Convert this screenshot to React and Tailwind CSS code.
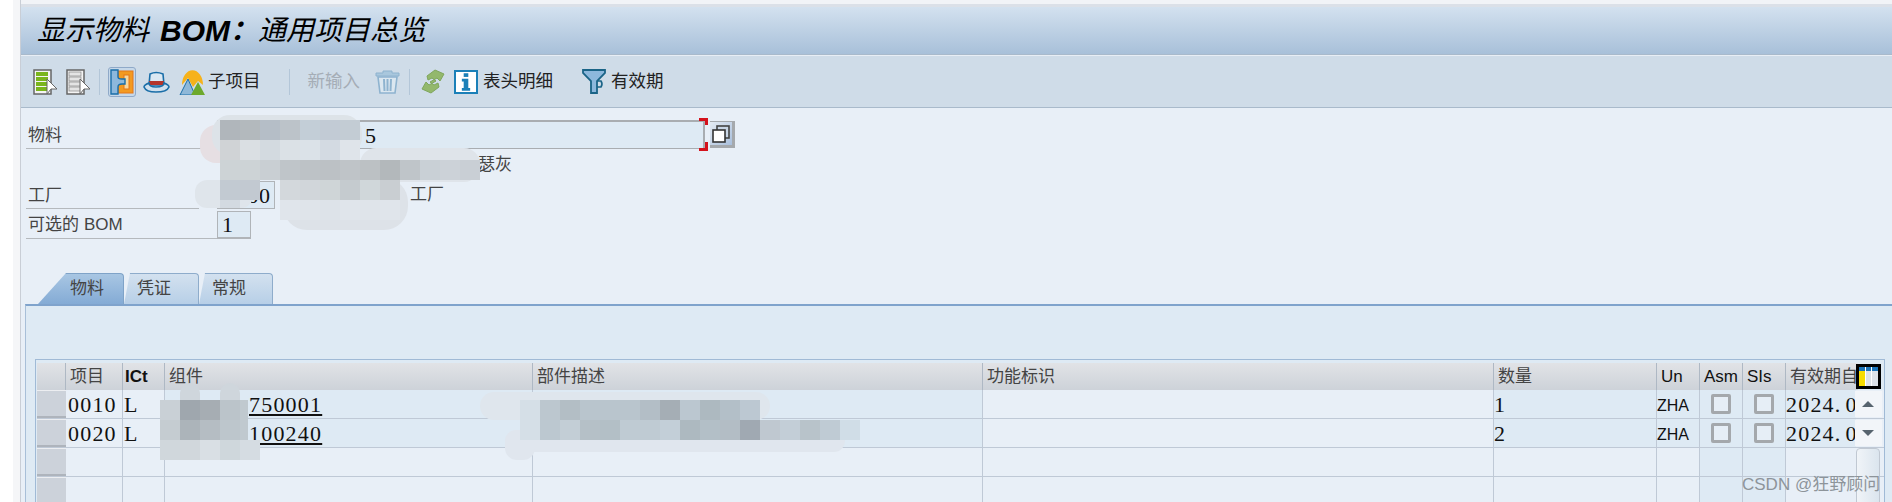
import React from 'react';

const serif = 'font-["Liberation_Serif","Noto_Sans_CJK_SC",serif]';
const sans = 'font-["Liberation_Sans","Noto_Sans_CJK_SC",sans-serif]';

// pixelated mosaic covering sensitive text, 20px squares like the screenshot
function Smudge({ className, cells }) {
  return (
    <div className={`absolute flex flex-col ${className}`}>
      {cells.map((row, i) => (
        <div key={i} className="flex">
          {row.map((c, j) => (
            <div key={j} style={{ width: 20, height: 20, background: c || 'transparent' }} />
          ))}
        </div>
      ))}
    </div>
  );
}

function Sep({ className }) {
  return <div className={`w-px h-[26px] shrink-0 bg-[#b3c6d8] ${className}`} />;
}

function LinesIcon({ green }) {
  const fill = green ? '#7ab51d' : '#e4e4e4';
  return (
    <svg width="25" height="26" viewBox="0 0 25 26" className="shrink-0">
      <rect x="1" y="1" width="17" height="24" fill="#f4f4f4" stroke="#666" strokeWidth="1.5" />
      {[3, 8, 13, 18].map((y) => (
        <rect key={y} x="3" y={y} width="12" height="4" fill={fill} stroke={green ? 'none' : '#888'} strokeWidth="0.7" />
      ))}
      <path d="M14 10 L24 20 L18 20 L14 25 Z" fill="#fff" stroke="#666" />
    </svg>
  );
}

function BridgeIcon() {
  return (
    <div className="w-[28px] h-[30px] shrink-0 border border-[#8fa9c8] rounded-[3px] bg-[#c6d8e9] flex items-center justify-center">
      <svg width="24" height="26" viewBox="0 0 24 26">
        <rect x="8" y="2" width="15" height="22" fill="#f39a21" stroke="#e4761b" />
        <rect x="14" y="6" width="5" height="14" fill="#f7d8a0" stroke="#e4761b" />
        <path d="M1 1 H8 V8 Q8 10 12 10 H15 V15 H12 Q8 15 8 18 V25 H1 Z" fill="#8db8dc" stroke="#1a6ea8" strokeWidth="1.4" />
      </svg>
    </div>
  );
}

function HatIcon() {
  return (
    <svg width="27" height="22" viewBox="0 0 27 22" className="shrink-0">
      <path d="M7 3 Q13 0 20 3 L21 14 H6 Z" fill="#dbe8f2" stroke="#1a6ea8" strokeWidth="1.6" />
      <rect x="6" y="10" width="15" height="4" fill="#b5352b" />
      <path d="M6 12 Q1 14 1 16 Q3 21 13 21 Q24 21 26 16 Q26 14 21 12 Q21 16 13 16 Q6 16 6 12 Z" fill="#cfe0ee" stroke="#1a6ea8" strokeWidth="1.6" />
    </svg>
  );
}

function MountainIcon() {
  return (
    <svg width="26" height="26" viewBox="0 0 26 26" className="shrink-0">
      <path d="M3 16 A10 14 0 0 1 24 16 L19 12 L14 18 L9 9 Z" fill="#f6b21b" />
      <path d="M1 26 L9 10 L16 26 Z" fill="#8fb8d8" stroke="#1a6ea8" />
      <path d="M12 26 L19 13 L26 26 Z" fill="#6da92c" />
    </svg>
  );
}

function TrashIcon() {
  return (
    <svg width="27" height="27" viewBox="0 0 27 27" className="shrink-0">
      <path d="M9 3 H18 V5 H25 V8 H2 V5 H9 Z" fill="#a9c7dd" stroke="#8eb3cf" />
      <path d="M4 9 H23 L21 25 H6 Z" fill="#dbe7f0" stroke="#8eb3cf" strokeWidth="1.6" />
      <path d="M10 11 L10.5 23 M13.5 11 V23 M17 11 L16.5 23" stroke="#8eb3cf" strokeWidth="2" />
    </svg>
  );
}

function SwapIcon() {
  return (
    <svg width="24" height="25" viewBox="0 0 24 25" className="shrink-0">
      <path d="M14 1 L23 5 L19 12 L16 9 L9 13 L13 16 L17 14 L18 18 L10 24 L1 20 L5 13 L8 16 L15 12 L11 9 L7 11 L6 7 Z" fill="#93b86c" stroke="#7fa65d" />
    </svg>
  );
}

function InfoIcon() {
  return (
    <div className="w-[24px] h-[24px] shrink-0 border-2 border-[#1b80b8] bg-white flex items-center justify-center">
      <svg width="12" height="18" viewBox="0 0 13 19">
        <rect x="4" y="0" width="5" height="4" fill="#1b80b8" />
        <path d="M2 6 H9 V16 H11 V19 H2 V16 H4 V9 H2 Z" fill="#1b80b8" />
      </svg>
    </div>
  );
}

function FilterIcon() {
  return (
    <svg width="24" height="25" viewBox="0 0 24 25" className="shrink-0">
      <path d="M1 1 H23 V4 L15 12 V24 H9 V12 L1 4 Z" fill="#8db8dc" stroke="#1a6487" strokeWidth="1.8" />
      <path d="M15 12 H19 Q21 15 19 18 H15" fill="none" stroke="#1a6487" strokeWidth="1.6" />
    </svg>
  );
}

function PopupIcon() {
  return (
    <div className="w-[25px] h-[27px] border-r-[3px] border-t border-b-[3px] border-[#a5a9ad] bg-gradient-to-br from-[#e4ebf3] to-[#a9bfdc] flex items-center justify-center">
      <svg width="20" height="20" viewBox="0 0 20 20">
        <rect x="6" y="2" width="12" height="12" fill="#c9d6e6" stroke="#444" strokeWidth="1.6" />
        <rect x="2" y="6" width="12" height="12" fill="#fff" stroke="#333" strokeWidth="1.6" />
      </svg>
    </div>
  );
}

function Label({ className, children }) {
  return (
    <div className={`h-full shrink-0 border-b border-[#b5b9bd] pl-[2px] pt-[3px] flex items-center text-[17px] text-[#444] whitespace-nowrap ${className}`}>
      {children}
    </div>
  );
}

function Head({ className, children, latin }) {
  return (
    <div className={`shrink-0 h-[27px] flex items-center overflow-hidden whitespace-nowrap border-r border-[#aeb8c4] bg-gradient-to-b from-[#e1e3e6] to-[#cdd2d9] pl-[4px] ${latin ? `${sans} text-[17px] text-[#111]` : 'text-[17px] text-[#444]'} ${className}`}>
      {children}
    </div>
  );
}

function Row({ no, link, qty, filled }) {
  const cell = 'shrink-0 h-full flex items-center overflow-hidden whitespace-nowrap border-r border-[#bfc9d6] text-[22px] tracking-[1.2px] text-[#111]';
  const tint = filled ? 'bg-[#deeaf4]' : 'bg-[#e8eff7]';
  const box = <div className="w-[20px] h-[20px] border-[3px] border-[#a4a8ac] rounded-[2px] bg-[#e6eef6]" />;
  return (
    <div className="flex h-[29px] border-b border-[#bfc9d6] bg-[#e8eff7]">
      <div className="w-[29px] shrink-0 border-t border-[#eceef1] border-b-2 border-b-[#aeb4bc] bg-[#ccd2da]" />
      <div className={`${cell} w-[57px] pl-[2px]`}>{no}</div>
      <div className={`${cell} w-[42px] pl-px`}>{filled ? 'L' : ''}</div>
      <div className={`${cell} w-[368px] ${tint} pl-[84px] underline underline-offset-2`}>{link}</div>
      <div className={`${cell} w-[450px] ${tint}`} />
      <div className={`${cell} w-[511px]`} />
      <div className={`${cell} w-[163px] ${tint}`}>{qty}</div>
      <div className={`${cell} w-[43px] ${tint} ${sans} !text-[16px] !tracking-normal pt-[3px]`}>{filled ? 'ZHA' : ''}</div>
      <div className={`${cell} w-[43px] bg-[#deeaf4] justify-center`}>{filled ? box : null}</div>
      <div className={`${cell} w-[43px] bg-[#deeaf4] justify-center`}>{filled ? box : null}</div>
      <div className={`${cell} w-[70px] ${tint} border-r-0`}>
        {filled ? <>2024.<span className="ml-[4px]">0</span></> : ''}
      </div>
    </div>
  );
}

export default function App() {
  return (
    <div className={`relative w-[1892px] h-[502px] overflow-hidden bg-white flex ${serif}`}>
      <div className="w-[13px] shrink-0 bg-white" />
      <div className="w-[7px] shrink-0 bg-[#f5f6f8]" />
      <div className="flex-1 min-w-0 flex flex-col border-l border-[#c9ced6] pt-[4px] bg-[#f1f3f7]">
        <div className="h-[3px] shrink-0 bg-[#dbe0e8]" />
        <div className={`h-[48px] shrink-0 bg-gradient-to-b from-[#d3e1ef] to-[#a8c0d9] border-b border-[#a9bacb] flex items-center pl-[16px] text-[28px] italic text-black whitespace-nowrap ${sans}`}>
          <span>显示物料</span>
          <span className="ml-[11px] font-bold text-[30px]">BOM</span>
          <span className="font-bold">：</span>
          <span>通用项目总览</span>
        </div>
        <div className="h-[53px] shrink-0 bg-[#cfdce8] border-t border-[#e8eef5] border-b border-b-[#a9bacb] flex items-center pl-[12px] text-[17.5px] text-[#222] whitespace-nowrap">
          <LinesIcon green />
          <div className="w-[8px] shrink-0" />
          <LinesIcon />
          <Sep className="ml-[8px]" />
          <div className="w-[8px] shrink-0" />
          <BridgeIcon />
          <div className="w-[7px] shrink-0" />
          <HatIcon />
          <div className="w-[9px] shrink-0" />
          <MountainIcon />
          <span className="ml-[3px]">子项目</span>
          <Sep className="ml-[28px]" />
          <span className="ml-[18px] text-[#a5adb6]">新输入</span>
          <div className="w-[14px] shrink-0" />
          <TrashIcon />
          <Sep className="ml-[8px]" />
          <div className="w-[11px] shrink-0" />
          <SwapIcon />
          <div className="w-[9px] shrink-0" />
          <InfoIcon />
          <span className="ml-[5px]">表头明细</span>
          <div className="w-[29px] shrink-0" />
          <FilterIcon />
          <span className="ml-[5px]">有效期</span>
        </div>
        <div className="flex-1 bg-[#e8eff7] flex flex-col relative">
          <div className="pt-[12px] pl-[5px] flex flex-col shrink-0">
            <div className="flex h-[29px]">
              <Label className="w-[191px]">物料</Label>
              <div className="w-[488px] border border-t-2 border-r-2 border-[#a9adb1] bg-[#deeaf4] flex items-center pl-[147px] text-[22px] text-[#111]">5</div>
              <div className="relative ml-[5px] mt-[1px]">
                <div className="absolute left-[-11px] top-[-3px] w-[9px] h-[7px] border-r-[3px] border-t-[3px] border-[#d4121c]" />
                <div className="absolute left-[-11px] top-[21px] w-[9px] h-[9px] border-r-[3px] border-b-[3px] border-[#d4121c]" />
                <PopupIcon />
              </div>
            </div>
            <div className="h-[32px] flex items-center pl-[452px] text-[17px] text-[#444]">瑟灰</div>
            <div className="flex h-[28px]">
              <Label className="w-[173px]">工厂</Label>
              <div className="w-[58px] ml-[18px] border border-[#b0b4b8] bg-[#deeaf4] flex items-center justify-end pr-[3px] text-[22px] tracking-[1px] text-[#111]">60</div>
              <div className="ml-[135px] flex items-center text-[17px] text-[#444]">工厂</div>
            </div>
            <div className="flex h-[30px]">
              <Label className="w-[191px]">
                可选的 <span className={`ml-[5px] ${sans} text-[17px]`}>BOM</span>
              </Label>
              <div className="w-[34px] mt-[2px] border border-b-2 border-[#b0b4b8] bg-[#deeaf4] flex items-center pl-[4px] text-[22px] text-[#111]">1</div>
            </div>
          </div>
          <div className="mt-[33px] ml-[4px] flex items-end h-[32px] shrink-0 text-[17px] text-[#444] pl-[13px]">
            <div className="w-[86px] h-[31px] bg-gradient-to-b from-[#a8c6e3] to-[#84abd5] border-t border-r border-[#7fa3c8] rounded-tr-sm flex items-center pl-[32px] [clip-path:polygon(28px_0,100%_0,100%_100%,0_100%)]">物料</div>
            <div className="w-[75px] h-[31px] bg-gradient-to-b from-[#d3e1ef] to-[#b7cfe7] border-t border-r border-[#8eaccb] rounded-tr-sm flex items-center pl-[13px] [clip-path:polygon(6px_0,100%_0,100%_100%,0_100%)]">凭证</div>
            <div className="w-[74px] h-[31px] bg-gradient-to-b from-[#d3e1ef] to-[#b7cfe7] border-t border-r border-[#8eaccb] rounded-tr-sm flex items-center pl-[13px] [clip-path:polygon(6px_0,100%_0,100%_100%,0_100%)]">常规</div>
          </div>
          <div className="ml-[4px] flex-1 border-t-2 border-t-[#7fa3cc] border-l border-l-[#a8bfd8] bg-[#deeaf4] pt-[53px] pl-[9px] pr-[7px]">
            <div className="relative h-[200px] border-t border-l border-r border-[#a0bad6] pt-[3px] pl-[1px]">
              <div className="flex">
                <Head className="w-[29px] pl-0" />
                <Head className="w-[57px]">项目</Head>
                <Head className="w-[42px] font-bold !pl-[2px]" latin>ICt</Head>
                <Head className="w-[368px]">组件</Head>
                <Head className="w-[450px]">部件描述</Head>
                <Head className="w-[511px]">功能标识</Head>
                <Head className="w-[163px]">数量</Head>
                <Head className="w-[43px]" latin>Un</Head>
                <Head className="w-[43px]" latin>Asm</Head>
                <Head className="w-[43px]" latin>SIs</Head>
                <Head className="w-[72px] border-r-0">有效期自</Head>
              </div>
              <Row no="0010" link="750001" qty="1" filled />
              <Row no="0020" link="100240" qty="2" filled />
              <Row />
              <Row />
              {/* table settings button and scroll bar */}
              <div className="absolute right-[2px] top-[4px] w-[28px] flex flex-col items-center">
                <svg width="25" height="25" viewBox="0 0 25 25">
                  <rect x="1.5" y="1.5" width="22" height="22" fill="#fff" stroke="#000" strokeWidth="3" />
                  <rect x="3" y="3" width="6" height="4" fill="#1a73b8" />
                  <rect x="10" y="3" width="5" height="4" fill="#1a73b8" />
                  <rect x="16" y="3" width="6" height="4" fill="#1a73b8" />
                  <rect x="3" y="7" width="6" height="15" fill="#f7dc00" />
                  <rect x="10" y="7" width="5" height="15" fill="#dde2e8" />
                  <rect x="16" y="7" width="6" height="15" fill="#dde2e8" />
                </svg>
                <div className="w-[27px] h-[26px] mt-[2px] bg-[#f2f5f9] flex items-center justify-center">
                  <div className="w-0 h-0 border-l-[6px] border-r-[6px] border-b-[6px] border-l-transparent border-r-transparent border-b-[#56636e]" />
                </div>
                <div className="w-[27px] h-[26px] mt-[3px] bg-[#f2f5f9] flex items-center justify-center">
                  <div className="w-0 h-0 border-l-[6px] border-r-[6px] border-t-[6px] border-l-transparent border-r-transparent border-t-[#56636e]" />
                </div>
                <div className="w-[24px] h-[70px] mt-[2px] border border-[#c0c8d2] rounded-sm bg-gradient-to-r from-[#f0f4f8] to-[#dbe5ee]" />
              </div>
            </div>
          </div>
        </div>
      </div>

      {/* header blur */}
      <div className="absolute left-[200px] top-[125px] w-[30px] h-[38px] rounded-l-[16px] bg-[#e6dfe3]" />
      <div className="absolute left-[212px] top-[115px] w-[150px] h-[40px] rounded-[18px] bg-[#dde3e8]" />
      <div className="absolute left-[360px] top-[148px] w-[120px] h-[34px] rounded-[16px] bg-[#dfe4ea]" />
      <div className="absolute left-[195px] top-[180px] w-[58px] h-[28px] rounded-[12px] bg-[#dfe5eb]" />
      <div className="absolute left-[283px] top-[178px] w-[125px] h-[52px] rounded-[24px] bg-[#dde2e8]" />
      <Smudge className="left-[220px] top-[120px]" cells={[
        ['#b0b6bb', '#b3b9bd', '#b5bec7', '#bcc3c9', '#c3ced7', '#c2cbd5', '#c3ccd4'],
        ['#d0d3d6', '#dadfe3', '#d3dae0', '#dbe1e6', '#dbe2e8', '#d3dae2', '#dfe4ea'],
        ['#cdd3d6', '#cdd3d6', '#c9cfd3', '#bfc5c9', '#bdc2c6', '#bcc1c5', '#bfc4c8', '#bcc1c4', '#b3b8bb', '#bfc5c9', '#c9d0d6', '#ccd2d8', '#c9cfd5'],
        ['#c2cad2', '#c2c9d1', '', '#d3d8dc', '#d1d6da', '#cfd5d7', '#c5cbcf', '#d0d7da', '#c9ced2'],
        ['', '', '', '#e0e5eb', '#dfe4ea', '#dde3e9', '#e0e5eb', '#dfe4ea', '#e0e5eb'],
      ]} />
      <div className="absolute left-[220px] top-[200px] w-[20px] h-[8px] bg-[#d3dae1]" />

      {/* table blurs */}
      <div className="absolute left-[180px] top-[383px] w-[20px] h-[20px] rounded-t-[10px] bg-[#cfd6dc]" />
      <div className="absolute left-[220px] top-[383px] w-[20px] h-[20px] rounded-t-[10px] bg-[#cfd6dc]" />
      <Smudge className="left-[160px] top-[400px]" cells={[
        ['#c9d0d6', '#9fa7ae', '#a6adb3', '#bbc4ca'],
        ['#c5ccd1', '#acb4ba', '#b5bdc3', '#bdc6cc'],
        ['#d0d7dc', '#d1d7dc', '#d9dfe4', '#cfd7dc', '#d5dce2'],
      ]} />
      <div className="absolute left-[240px] top-[400px] w-[8px] h-[40px] bg-[#c0c9cf]" />
      <div className="absolute left-[480px] top-[392px] w-[290px] h-[28px] rounded-[14px] bg-[#dfe6ed]" />
      <div className="absolute left-[505px] top-[430px] w-[340px] h-[22px] rounded-[11px] bg-[#e0e6ee]" />
      <div className="absolute left-[505px] top-[440px] w-[30px] h-[20px] rounded-b-[12px] bg-[#e0e6ee]" />
      <Smudge className="left-[520px] top-[400px]" cells={[
        ['#d5dfe7', '#bcc7cf', '#b3bec5', '#b9c5cd', '#b9c5cd', '#b9c5cd', '#b3bec6', '#a5aeb5', '#bbc7d0', '#adb9c0', '#b3bfc8', '#bcc8d2'],
        ['#d5dfe7', '#bcc8d0', '#c3ced6', '#b5c0c7', '#b3bfc6', '#bfcbd3', '#bfcbd3', '#c3cfd8', '#adb9c0', '#b3bfc7', '#b3bdc5', '#a0a9b2', '#bfc8d0', '#c3ced7', '#b8c3ca', '#bfcbd4', '#d0dde7'],
      ]} />

      <div className={`absolute left-[1742px] top-[473px] text-[17px] leading-[24px] text-[#8d949a] whitespace-nowrap ${sans}`}>CSDN @狂野顾问</div>
    </div>
  );
}
